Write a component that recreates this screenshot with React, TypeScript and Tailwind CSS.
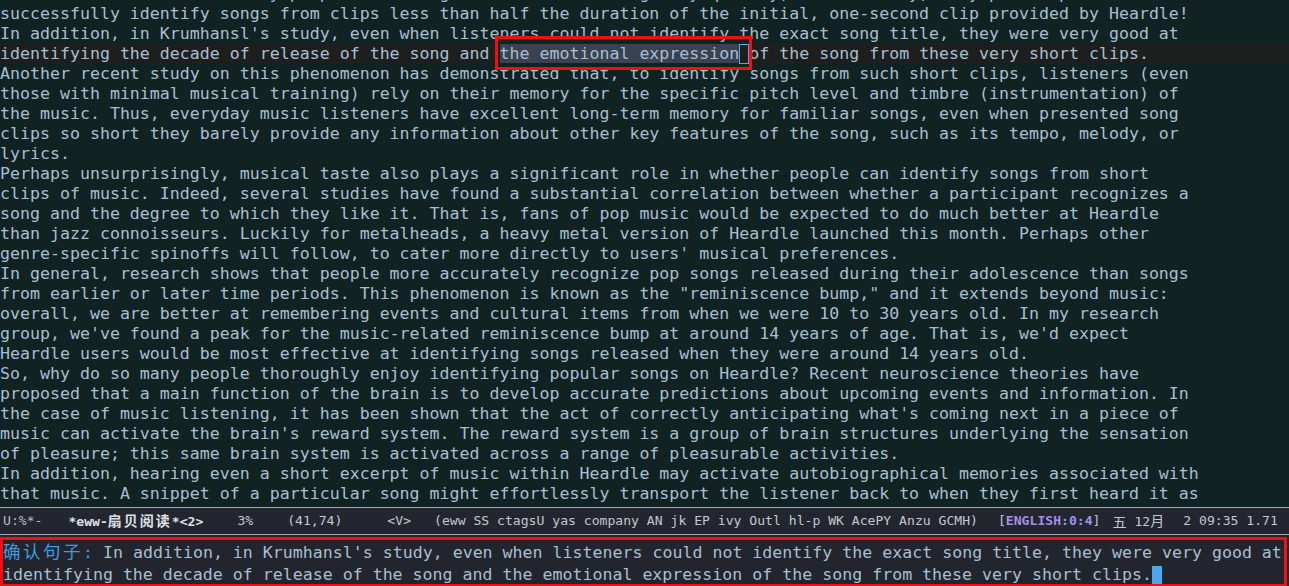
import React from 'react';

const mono = "font-['DejaVu_Sans_Mono','Liberation_Mono',monospace]";
const cjk = "font-['Noto_Sans_CJK_SC',sans-serif]";

const lines: string[] = [
  "research has shown that many people can recognize a familiar song very quickly; in one study, many participants could",
  "successfully identify songs from clips less than half the duration of the initial, one-second clip provided by Heardle!",
  "In addition, in Krumhansl's study, even when listeners could not identify the exact song title, they were very good at",
  "identifying the decade of release of the song and the emotional expression of the song from these very short clips.",
  "Another recent study on this phenomenon has demonstrated that, to identify songs from such short clips, listeners (even",
  "those with minimal musical training) rely on their memory for the specific pitch level and timbre (instrumentation) of",
  "the music. Thus, everyday music listeners have excellent long-term memory for familiar songs, even when presented song",
  "clips so short they barely provide any information about other key features of the song, such as its tempo, melody, or",
  "lyrics.",
  "Perhaps unsurprisingly, musical taste also plays a significant role in whether people can identify songs from short",
  "clips of music. Indeed, several studies have found a substantial correlation between whether a participant recognizes a",
  "song and the degree to which they like it. That is, fans of pop music would be expected to do much better at Heardle",
  "than jazz connoisseurs. Luckily for metalheads, a heavy metal version of Heardle launched this month. Perhaps other",
  "genre-specific spinoffs will follow, to cater more directly to users' musical preferences.",
  "In general, research shows that people more accurately recognize pop songs released during their adolescence than songs",
  "from earlier or later time periods. This phenomenon is known as the \"reminiscence bump,\" and it extends beyond music:",
  "overall, we are better at remembering events and cultural items from when we were 10 to 30 years old. In my research",
  "group, we've found a peak for the music-related reminiscence bump at around 14 years of age. That is, we'd expect",
  "Heardle users would be most effective at identifying songs released when they were around 14 years old.",
  "So, why do so many people thoroughly enjoy identifying popular songs on Heardle? Recent neuroscience theories have",
  "proposed that a main function of the brain is to develop accurate predictions about upcoming events and information. In",
  "the case of music listening, it has been shown that the act of correctly anticipating what's coming next in a piece of",
  "music can activate the brain's reward system. The reward system is a group of brain structures underlying the sensation",
  "of pleasure; this same brain system is activated across a range of pleasurable activities.",
  "In addition, hearing even a short excerpt of music within Heardle may activate autobiographical memories associated with",
  "that music. A snippet of a particular song might effortlessly transport the listener back to when they first heard it as",
  "a teenager, bringing back the feelings and memories of that time, which can be a rewarding experience in its own right.",
];

function BufferLine({ text, index }: { text: string; index: number }) {
  // line 3 carries the hl-line, the region and the hollow cursor
  if (index === 3) {
    return (
      <div className="h-[20px] leading-[20px] whitespace-pre bg-[#1d1f1f]">
        <span>{'identifying the decade of release of the song and '}</span>
        <span className="bg-[#3a4252]">the emotional expression</span>
        <span className="inline-block w-[10px] h-[20px] align-top border border-[#4fa8e8]"></span>
        <span>{'of the song from these very short clips.'}</span>
      </div>
    );
  }
  return <div className="h-[20px] leading-[20px] whitespace-pre">{text}</div>;
}

export default function App() {
  return (
    <div className={`w-[1289px] h-[586px] overflow-hidden flex flex-col bg-[#22252d] ${mono}`}>
      {/* eww buffer */}
      <div className="relative h-[507px] shrink-0 overflow-hidden bg-[#112222] text-[#a8bfd1] text-[16.6px]">
        <div className="-mt-[16px]">
          {lines.map((line, i) => (
            <BufferLine key={i} text={line} index={i} />
          ))}
        </div>
        {/* annotation box */}
        <div className="absolute left-[495px] top-[36px] w-[257px] h-[34px] border-[3px] border-[#f01010]"></div>
      </div>

      {/* mode line */}
      <div className="h-px bg-[#a3a7ae] shrink-0"></div>
      <div className="h-[26px] shrink-0 flex items-center bg-[#23262e] text-[13.1px] text-[#c3c8d0] whitespace-pre">
        <span className="ml-[3px] text-[#b5bac2]">U:%*-</span>
        <span className="ml-[26px] font-bold text-[#dde1e8]">
          *eww-<span className={`${cjk} text-[14px] tracking-[2px] font-bold`}>扇贝阅读</span>*&lt;2&gt;
        </span>
        <span className="ml-[34px]">3%</span>
        <span className="ml-[34px]">(41,74)</span>
        <span className="ml-[45px]">&lt;V&gt;</span>
        <span className="ml-[23px]">(eww SS ctagsU yas company AN jk EP ivy Outl hl-p WK AcePY Anzu GCMH)</span>
        <span className="ml-[20px]">
          [<span className="font-bold text-[#a48eea]">ENGLISH:0:4</span>]
        </span>
        <span className={`ml-[12px] ${cjk} text-[14px]`}>五</span>
        <span className="ml-[8px]">
          12<span className={`${cjk} text-[14px]`}>月</span>
        </span>
        <span className="ml-[19px]">2 09:35 1.71</span>
      </div>
      <div className="h-px bg-[#a3a7ae] shrink-0"></div>

      {/* minibuffer */}
      <div className="mt-[2px] w-[1287px] h-[50px] shrink-0 border-[3px] border-[#f01010] bg-[#22252d] text-[16.6px] text-[#a8bfd1]">
        <div className="h-[22px] leading-[22px] whitespace-pre">
          <span className={`${cjk} text-[17.5px] tracking-[2.5px] text-[#3f9ee3]`}>确认句子</span>
          <span className="text-[#3f9ee3]">:</span>
          {" In addition, in Krumhansl's study, even when listeners could not identify the exact song title, they were very good at"}
        </div>
        <div className="h-[22px] mt-[2px] leading-[22px] whitespace-pre flex items-center">
          <span>identifying the decade of release of the song and the emotional expression of the song from these very short clips.</span>
          <span className="inline-block w-[10px] h-[18px] bg-[#4aa8ef]"></span>
        </div>
      </div>
    </div>
  );
}
